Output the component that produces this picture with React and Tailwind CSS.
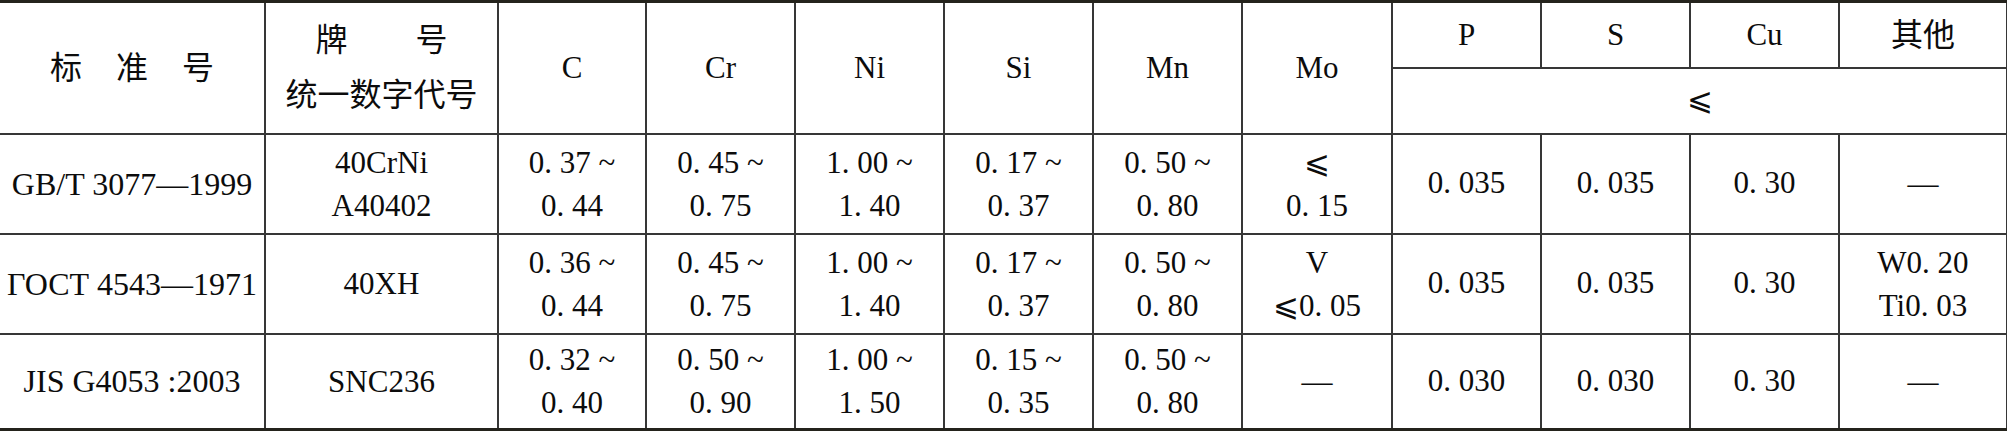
const serif = "font-['Liberation_Serif','Noto_Sans_CJK_SC',serif]";

const rows = [
  {
    std: "GB/T 3077—1999",
    grade: ["40CrNi", "A40402"],
    c: ["0. 37 ~", "0. 44"],
    cr: ["0. 45 ~", "0. 75"],
    ni: ["1. 00 ~", "1. 40"],
    si: ["0. 17 ~", "0. 37"],
    mn: ["0. 50 ~", "0. 80"],
    mo: ["⩽", "0. 15"],
    p: "0. 035",
    s: "0. 035",
    cu: "0. 30",
    other: ["—"],
    h: "h-[100px]",
  },
  {
    std: "ГОСТ 4543—1971",
    grade: ["40XH"],
    c: ["0. 36 ~", "0. 44"],
    cr: ["0. 45 ~", "0. 75"],
    ni: ["1. 00 ~", "1. 40"],
    si: ["0. 17 ~", "0. 37"],
    mn: ["0. 50 ~", "0. 80"],
    mo: ["V", "⩽0. 05"],
    p: "0. 035",
    s: "0. 035",
    cu: "0. 30",
    other: ["W0. 20", "Ti0. 03"],
    h: "h-[100px]",
  },
  {
    std: "JIS G4053 :2003",
    grade: ["SNC236"],
    c: ["0. 32 ~", "0. 40"],
    cr: ["0. 50 ~", "0. 90"],
    ni: ["1. 00 ~", "1. 50"],
    si: ["0. 15 ~", "0. 35"],
    mn: ["0. 50 ~", "0. 80"],
    mo: ["—"],
    p: "0. 030",
    s: "0. 030",
    cu: "0. 30",
    other: ["—"],
    h: "h-[96px]",
  },
];

const widths = [265, 233, 148, 149, 149, 149, 149, 150, 149, 149, 149, 168];

const cell = "border-r-2 border-b-2 border-[#363636] text-center align-middle p-0";

const Lines = ({ items }) => (
  <div className="flex flex-col items-center leading-[43px]">
    {items.map((t, i) => (
      <span key={i} className="whitespace-pre">
        {t}
      </span>
    ))}
  </div>
);

const App = () => {
  return (
    <div className={`w-[2007px] h-[431px] bg-white text-[#0c0c0c] ${serif} text-[31px]`}>
      <table className="table-fixed border-collapse w-[2007px]">
        <colgroup>
          {widths.map((w, i) => (
            <col key={i} style={{ width: w }} />
          ))}
        </colgroup>
        <thead>
          <tr className="h-[66px] border-t-[3px] border-[#24231c]">
            <th rowSpan={2} className={`${cell} font-normal text-[32px]`}>
              <div className="flex justify-center gap-[34px]">
                <span>标</span>
                <span>准</span>
                <span>号</span>
              </div>
            </th>
            <th rowSpan={2} className={`${cell} font-normal text-[32px]`}>
              <div className="flex flex-col items-center leading-[55px]">
                <div className="flex gap-[68px]">
                  <span>牌</span>
                  <span>号</span>
                </div>
                <span>统一数字代号</span>
              </div>
            </th>
            {["C", "Cr", "Ni", "Si", "Mn", "Mo"].map((el) => (
              <th key={el} rowSpan={2} className={`${cell} font-normal`}>
                {el}
              </th>
            ))}
            <th className={`${cell} font-normal`}>P</th>
            <th className={`${cell} font-normal`}>S</th>
            <th className={`${cell} font-normal`}>Cu</th>
            <th className={`${cell} border-r-0 font-normal text-[32px]`}>其他</th>
          </tr>
          <tr className="h-[66px]">
            <th colSpan={4} className={`${cell} border-r-0 font-normal`}>
              ⩽
            </th>
          </tr>
        </thead>
        <tbody>
          {rows.map((r, idx) => (
            <tr
              key={r.std}
              className={`${r.h} ${idx === rows.length - 1 ? "border-b-[3px] border-[#24231c]" : ""}`}
            >
              <td className={`${cell} text-[32px]`}>
                <span className="whitespace-pre">{r.std}</span>
              </td>
              <td className={cell}>
                <Lines items={r.grade} />
              </td>
              <td className={cell}>
                <Lines items={r.c} />
              </td>
              <td className={cell}>
                <Lines items={r.cr} />
              </td>
              <td className={cell}>
                <Lines items={r.ni} />
              </td>
              <td className={cell}>
                <Lines items={r.si} />
              </td>
              <td className={cell}>
                <Lines items={r.mn} />
              </td>
              <td className={cell}>
                <Lines items={r.mo} />
              </td>
              <td className={cell}>
                <span className="whitespace-pre">{r.p}</span>
              </td>
              <td className={cell}>
                <span className="whitespace-pre">{r.s}</span>
              </td>
              <td className={cell}>
                <span className="whitespace-pre">{r.cu}</span>
              </td>
              <td className={`${cell} border-r-0`}>
                <Lines items={r.other} />
              </td>
            </tr>
          ))}
        </tbody>
      </table>
    </div>
  );
};

export default App;
